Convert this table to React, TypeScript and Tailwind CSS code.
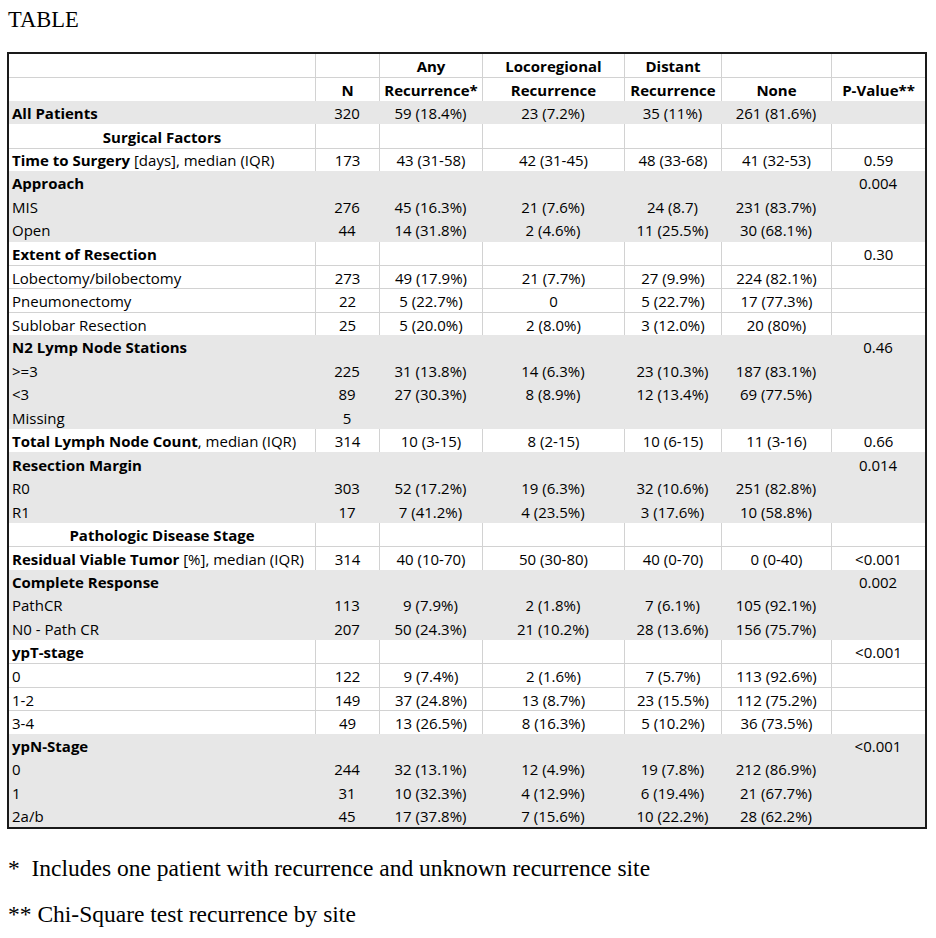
import React from "react";

type Kind = "head" | "section" | "data";
type Row = {
  kind: Kind;
  gray?: boolean;
  label: React.ReactNode;
  vals: string[];
};

const B = ({ children }: { children: React.ReactNode }) => (
  <span className="font-bold">{children}</span>
);

const rows: Row[] = [
  { kind: "head", label: "", vals: ["", "Any", "Locoregional", "Distant", "", ""] },
  { kind: "head", label: "", vals: ["N", "Recurrence*", "Recurrence", "Recurrence", "None", "P-Value**"] },
  { kind: "data", gray: true, label: <B>All Patients</B>, vals: ["320", "59 (18.4%)", "23 (7.2%)", "35 (11%)", "261 (81.6%)", ""] },
  { kind: "section", label: "Surgical Factors", vals: ["", "", "", "", "", ""] },
  { kind: "data", label: <><B>Time to Surgery</B>{" [days], median (IQR)"}</>, vals: ["173", "43 (31-58)", "42 (31-45)", "48 (33-68)", "41 (32-53)", "0.59"] },
  { kind: "data", gray: true, label: <B>Approach</B>, vals: ["", "", "", "", "", "0.004"] },
  { kind: "data", gray: true, label: "MIS", vals: ["276", "45 (16.3%)", "21 (7.6%)", "24 (8.7)", "231 (83.7%)", ""] },
  { kind: "data", gray: true, label: "Open", vals: ["44", "14 (31.8%)", "2 (4.6%)", "11 (25.5%)", "30 (68.1%)", ""] },
  { kind: "data", label: <B>Extent of Resection</B>, vals: ["", "", "", "", "", "0.30"] },
  { kind: "data", label: "Lobectomy/bilobectomy", vals: ["273", "49 (17.9%)", "21 (7.7%)", "27 (9.9%)", "224 (82.1%)", ""] },
  { kind: "data", label: "Pneumonectomy", vals: ["22", "5 (22.7%)", "0", "5 (22.7%)", "17 (77.3%)", ""] },
  { kind: "data", label: "Sublobar Resection", vals: ["25", "5 (20.0%)", "2 (8.0%)", "3 (12.0%)", "20 (80%)", ""] },
  { kind: "data", gray: true, label: <B>N2 Lymp Node Stations</B>, vals: ["", "", "", "", "", "0.46"] },
  { kind: "data", gray: true, label: ">=3", vals: ["225", "31 (13.8%)", "14 (6.3%)", "23 (10.3%)", "187 (83.1%)", ""] },
  { kind: "data", gray: true, label: "<3", vals: ["89", "27 (30.3%)", "8 (8.9%)", "12 (13.4%)", "69 (77.5%)", ""] },
  { kind: "data", gray: true, label: "Missing", vals: ["5", "", "", "", "", ""] },
  { kind: "data", label: <><B>Total Lymph Node Count</B>{", median (IQR)"}</>, vals: ["314", "10 (3-15)", "8 (2-15)", "10 (6-15)", "11 (3-16)", "0.66"] },
  { kind: "data", gray: true, label: <B>Resection Margin</B>, vals: ["", "", "", "", "", "0.014"] },
  { kind: "data", gray: true, label: "R0", vals: ["303", "52 (17.2%)", "19 (6.3%)", "32 (10.6%)", "251 (82.8%)", ""] },
  { kind: "data", gray: true, label: "R1", vals: ["17", "7 (41.2%)", "4 (23.5%)", "3 (17.6%)", "10 (58.8%)", ""] },
  { kind: "section", label: "Pathologic Disease Stage", vals: ["", "", "", "", "", ""] },
  { kind: "data", label: <><B>Residual Viable Tumor</B>{" [%], median (IQR)"}</>, vals: ["314", "40 (10-70)", "50 (30-80)", "40 (0-70)", "0 (0-40)", "<0.001"] },
  { kind: "data", gray: true, label: <B>Complete Response</B>, vals: ["", "", "", "", "", "0.002"] },
  { kind: "data", gray: true, label: "PathCR", vals: ["113", "9 (7.9%)", "2 (1.8%)", "7 (6.1%)", "105 (92.1%)", ""] },
  { kind: "data", gray: true, label: "N0 - Path CR", vals: ["207", "50 (24.3%)", "21 (10.2%)", "28 (13.6%)", "156 (75.7%)", ""] },
  { kind: "data", label: <B>ypT-stage</B>, vals: ["", "", "", "", "", "<0.001"] },
  { kind: "data", label: "0", vals: ["122", "9 (7.4%)", "2 (1.6%)", "7 (5.7%)", "113 (92.6%)", ""] },
  { kind: "data", label: "1-2", vals: ["149", "37 (24.8%)", "13 (8.7%)", "23 (15.5%)", "112 (75.2%)", ""] },
  { kind: "data", label: "3-4", vals: ["49", "13 (26.5%)", "8 (16.3%)", "5 (10.2%)", "36 (73.5%)", ""] },
  { kind: "data", gray: true, label: <B>ypN-Stage</B>, vals: ["", "", "", "", "", "<0.001"] },
  { kind: "data", gray: true, label: "0", vals: ["244", "32 (13.1%)", "12 (4.9%)", "19 (7.8%)", "212 (86.9%)", ""] },
  { kind: "data", gray: true, label: "1", vals: ["31", "10 (32.3%)", "4 (12.9%)", "6 (19.4%)", "21 (67.7%)", ""] },
  { kind: "data", gray: true, label: "2a/b", vals: ["45", "17 (37.8%)", "7 (15.6%)", "10 (22.2%)", "28 (62.2%)", ""] },
];

function TableRow({ row, lineTop }: { row: Row; lineTop: boolean }) {
  const gray = !!row.gray;
  return (
    <div
      className={`grid grid-cols-[306px_64px_103px_142px_97px_110px_94px] h-[23.44px] ${
        gray ? "bg-[#e7e7e7]" : "bg-white"
      } ${lineTop ? "border-t border-[#d2d2d2]" : ""}`}
    >
      <div
        className={`flex items-center pt-[1px] whitespace-pre ${
          row.kind === "section" ? "justify-center font-bold" : "pl-[3px]"
        }`}
      >
        <span>{row.label}</span>
      </div>
      {row.vals.map((v, i) => (
        <div
          key={i}
          className={`flex items-center justify-center pt-[1px] whitespace-nowrap ${
            gray ? "" : "border-l border-[#d2d2d2]"
          } ${row.kind === "head" ? "font-bold" : ""}`}
        >
          <span>{v}</span>
        </div>
      ))}
    </div>
  );
}

export default function App() {
  return (
    <div className="w-[936px] h-[938px] bg-white text-black overflow-hidden">
      <div className="ml-[8px] mt-[7px] leading-[25px] text-[22.5px] font-['Liberation_Serif',serif]">
        TABLE
      </div>
      <div className="mt-[20px] ml-[7px] w-[920px] border-2 border-[#1a1a1a] font-['Open_Sans',sans-serif] text-[15px] leading-[20px] text-black">
        {rows.map((r, i) => {
          const prev = rows[i - 1];
          const lineTop = i > 0 && !r.gray && !!prev && !prev.gray;
          return <TableRow key={i} row={r} lineTop={lineTop} />;
        })}
      </div>
      <div className="font-['Liberation_Serif',serif] text-[23.5px] leading-[25px] ml-[8px]">
        <div className="mt-[26.5px] whitespace-pre">{"*  Includes one patient with recurrence and unknown recurrence site"}</div>
        <div className="mt-[21px] whitespace-pre">{"** Chi-Square test recurrence by site"}</div>
      </div>
    </div>
  );
}
